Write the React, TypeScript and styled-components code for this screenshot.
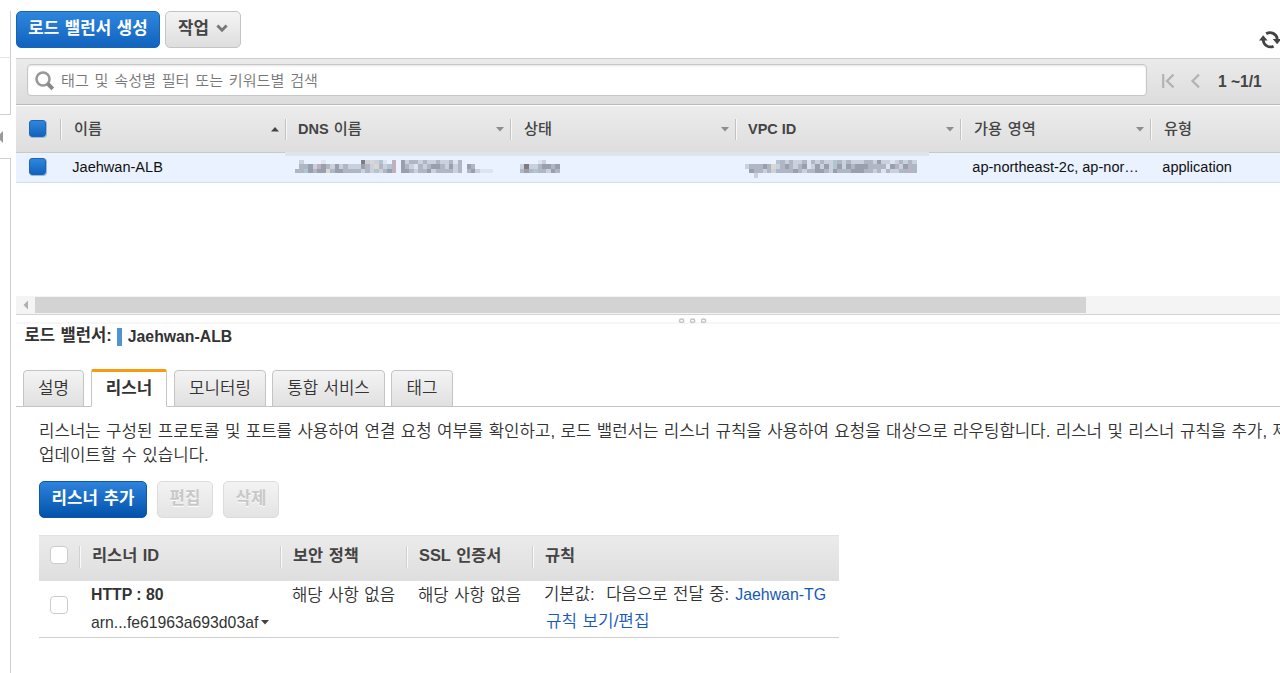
import React from 'react';
import styled, { createGlobalStyle } from 'styled-components';

const colors = {
  text: '#333',
  heading: '#444',
  link: '#1659b8',
  border: '#c4c4c4',
  selected: '#e9f2fe',
};

const GlobalStyle = createGlobalStyle`
  * {
    box-sizing: border-box;
  }

  body {
    margin: 0;
    background: #fff;
    color: ${colors.text};
    font-family: 'Liberation Sans', 'Noto Sans CJK KR', sans-serif;
    overflow: hidden;
  }
`;

const Page = styled.div`
  display: flex;
  width: 1280px;
  height: 673px;
  overflow: hidden;
`;

const Rail = styled.aside`
  display: flex;
  flex-direction: column;
  flex: 0 0 11px;
  margin-right: 5px;
  padding-top: 11px;
`;

const RailSection = styled.div<{ $height?: number; $top?: boolean; $bottom?: string }>`
  flex: ${(props) => (props.$height ? `0 0 ${props.$height}px` : 1)};
  border-right: 1px solid #cfcfcf;
  border-top: ${(props) => (props.$top ? '1px solid #cfcfcf' : 'none')};
  border-bottom: ${(props) => (props.$bottom ? `1px solid ${props.$bottom}` : 'none')};
`;

const RailToggle = styled.div`
  display: flex;
  align-items: center;
  flex: 0 0 43px;
`;

const Main = styled.main`
  display: flex;
  flex-direction: column;
  flex: 1;
  min-width: 0;
`;

const Toolbar = styled.div`
  display: flex;
  align-items: flex-start;
  gap: 5px;
  flex: 0 0 58px;
  padding-top: 11px;
`;

type ButtonKind = 'primary' | 'strong' | 'normal' | 'disabled';

const buttonStyles: Record<ButtonKind, string> = {
  primary: 'color: #fff; background: linear-gradient(#2f86dd, #1163bd); border-color: #1a63b4;',
  strong: 'color: #fff; background: linear-gradient(#2e83dc, #0252ab); border-color: #0f57a8;',
  normal: 'color: #444; background: linear-gradient(#f4f4f4, #dedede); border-color: #c4c4c4;',
  disabled:
    'color: #c8c8c8; background: linear-gradient(#f3f3f3, #e4e4e4); border-color: #dcdcdc; text-shadow: 0 1px 0 #fff;',
};

const Button = styled.button<{ $kind: ButtonKind; $width: number }>`
  display: flex;
  align-items: center;
  justify-content: center;
  width: ${(props) => props.$width}px;
  height: 37px;
  padding: 0 0 2px;
  border: 1px solid;
  border-radius: 5px;
  font: bold 16.8px 'Liberation Sans', 'Noto Sans CJK KR', sans-serif;
  line-height: 20px;
  white-space: nowrap;
  word-spacing: 1px;
  ${(props) => buttonStyles[props.$kind]}
`;

const ButtonIcon = styled.svg`
  margin-left: 7px;
`;

const RefreshIcon = styled.svg`
  flex: none;
  margin: 19px -1px 0 auto;
`;

const FilterBar = styled.div`
  display: flex;
  align-items: center;
  flex: 0 0 47px;
  padding: 0 0 3px 11px;
  border-top: 1px solid #ccc;
  border-bottom: 1px solid #b9b9b9;
  background: linear-gradient(#ebebeb, #dcdcdc);
`;

const SearchBox = styled.div`
  display: flex;
  align-items: center;
  width: 1120px;
  height: 32px;
  padding: 1px 0 0 7px;
  border: 1px solid #c6c6c6;
  border-radius: 4px;
  background: #fff;
  box-shadow: inset 0 1px 2px #e4e4e4;
`;

const Placeholder = styled.span`
  margin-left: 6px;
  padding-top: 1px;
  color: #777;
  font-size: 15.1px;
  font-weight: 350;
  line-height: 20px;
  word-spacing: 1.6px;
`;

const Pager = styled.div`
  display: flex;
  align-items: center;
  margin-left: 14px;
  padding-top: 2px;
`;

const PagerText = styled.span`
  margin-left: 17px;
  padding-top: 2px;
  color: ${colors.heading};
  font-size: 15.6px;
  font-weight: bold;
  white-space: nowrap;
`;

const gridColumns = '44px 225px 225px 225px 225px 190px 130px';

const HeaderRow = styled.div`
  display: grid;
  grid-template-columns: ${gridColumns};
  align-items: center;
  flex: 0 0 48px;
  border-top: 1px solid #fff;
  border-bottom: 1px solid #c9c9c9;
  background: linear-gradient(#ececec, #dedede);
`;

const HeaderCell = styled.div`
  display: flex;
  align-items: center;
  justify-content: space-between;
  height: 21px;
  padding: 0 6px 0 12px;
  border-left: 1px solid #c2c2c2;
  box-shadow: inset 1px 0 0 #f8f8f8;
  color: ${colors.heading};
  font-size: 14.5px;
  font-weight: bold;
  white-space: nowrap;
`;

const HeaderLabel = styled.span`
  padding-bottom: 1px;
  line-height: 20px;
`;

const HangulLabel = styled.span`
  margin-left: 1px;
  font-size: 15.2px;
  font-weight: 500;
  word-spacing: 1.5px;
`;

const SelectedRow = styled.div`
  display: grid;
  grid-template-columns: ${gridColumns};
  align-items: center;
  flex: 0 0 30px;
  border-bottom: 1px solid #d5dde8;
  background: ${colors.selected};
`;

const Cell = styled.div`
  min-width: 0;
  padding: 0 0 2px 12.3px;
  overflow: hidden;
  color: #111;
  font-size: 14.55px;
  line-height: 20px;
  white-space: nowrap;
`;

const CheckCell = styled.div`
  display: flex;
  padding: 0 0 1px 13px;
`;

const Checkbox = styled.span<{ $checked?: boolean }>`
  display: flex;
  align-items: flex-end;
  justify-content: flex-end;
  width: 18px;
  height: 18px;
  border: 1px solid #ccc;
  border-right-color: ${(props) => (props.$checked ? '#9db8d6' : '#ccc')};
  border-bottom-color: ${(props) => (props.$checked ? '#9db8d6' : '#ccc')};
  border-radius: 4px;
  background: ${(props) => (props.$checked ? '#f2f2f2' : '#fff')};

  &::after {
    content: '';
    display: ${(props) => (props.$checked ? 'block' : 'none')};
    flex: none;
    width: 15px;
    height: 15px;
    border: 1px solid #1a66ba;
    border-radius: 3px;
    background: linear-gradient(#3086dc, #1263bd);
  }
`;

const ScrollBar = styled.div`
  display: flex;
  align-items: center;
  flex: 0 0 18px;
  margin-top: 113px;
  background: #f4f4f4;
`;

const ScrollArrow = styled.svg`
  flex: 0 0 19px;
`;

const ScrollThumb = styled.div`
  width: 1051px;
  height: 16px;
  background: #d3d3d3;
`;

const Splitter = styled.div`
  display: flex;
  justify-content: center;
  flex: 0 0 10px;
  min-height: 0;
  height: 10px;
  padding: 3px 0 0 90px;
  border-top: 1px solid #d2d2d2;
  border-bottom: 2px solid #f6f6f6;
`;

const Title = styled.h2`
  display: flex;
  align-items: center;
  flex: 0 0 46px;
  margin: 0;
  padding: 0 0 22px 8.5px;
  font-size: 15.8px;
  line-height: 22px;
`;

const TitleLabel = styled.span`
  font-size: 16.6px;
  word-spacing: 0.8px;
`;

const TitleMarker = styled.span`
  width: 5px;
  height: 18px;
  margin: 2px 6px 0 5px;
  background: #4f93d2;
`;

const TitleName = styled.span`
  padding-top: 1px;
`;

const TabList = styled.div`
  display: flex;
  align-items: flex-end;
  flex: 0 0 37px;
  height: 37px;
  min-height: 0;
  padding-left: 7px;
  box-shadow: inset 0 -1px 0 ${colors.border};
`;

const Tab = styled.div<{ $width: number; $gap?: number; $active?: boolean }>`
  display: flex;
  align-items: center;
  justify-content: center;
  width: ${(props) => props.$width}px;
  height: ${(props) => (props.$active ? 38 : 37)}px;
  margin-right: ${(props) => props.$gap ?? 6}px;
  border: 1px solid ${colors.border};
  border-top: ${(props) => (props.$active ? '3px solid #fa9a0e' : `1px solid ${colors.border}`)};
  border-bottom-color: ${(props) => (props.$active ? '#fff' : colors.border)};
  border-radius: ${(props) => (props.$active ? '2px 2px 0 0' : '4px 4px 0 0')};
  background: ${(props) => (props.$active ? '#fff' : 'linear-gradient(#f4f4f4, #e0e0e0)')};
  font-size: 16.8px;
  font-weight: ${(props) => (props.$active ? 'bold' : 350)};
  line-height: 24px;
  white-space: nowrap;
  word-spacing: 0.7px;
`;

const Panel = styled.section`
  padding: 13px 0 0 23px;
`;

const Description = styled.p`
  margin: 0;
  font-size: 16.8px;
  font-weight: 350;
  line-height: 24px;
  white-space: nowrap;
  word-spacing: 0.7px;
`;

const Actions = styled.div`
  display: flex;
  gap: 10px;
  margin-top: 13px;
`;

const ListenerTable = styled.div`
  width: 800px;
  margin-top: 17px;
  border-bottom: 1px solid #cfcfcf;
`;

const listenerColumns = '41px 201px 126px 126px 306px';

const ListenerHeader = styled.div`
  display: grid;
  grid-template-columns: ${listenerColumns};
  height: 46px;
  padding-top: 10px;
  border-top: 1px solid #e2e2e2;
  background: linear-gradient(#ebebeb, #dedede);
`;

const ListenerHeading = styled.div`
  height: 22px;
  padding-left: 12px;
  margin-left: -1px;
  border-left: 1px solid #d0d0d0;
  box-shadow: inset 1px 0 0 #fafafa;
  color: ${colors.heading};
  font-size: 16.4px;
  font-weight: bold;
  line-height: 18px;
  white-space: nowrap;
  word-spacing: 1px;
`;

const ListenerRow = styled.div`
  display: grid;
  grid-template-columns: ${listenerColumns};
  height: 56px;
`;

const ListenerCheck = styled.div<{ $top?: number }>`
  padding: ${(props) => props.$top ?? -0}px 0 0 11px;
`;

const ListenerCell = styled.div<{ $light?: boolean; $top?: number }>`
  padding: ${(props) => props.$top ?? 0}px 0 0 11px;
  font-size: 16.7px;
  font-weight: ${(props) => (props.$light ? 350 : 400)};
  line-height: 27px;
  white-space: nowrap;
  word-spacing: 0.8px;
`;

const Protocol = styled.strong`
  display: block;
  font-size: 15.8px;
  line-height: 28px;
  word-spacing: 0;
`;

const Arn = styled.span`
  display: flex;
  align-items: center;
  gap: 3px;
  font-size: 15.75px;
`;

const RuleTarget = styled.div`
  display: flex;
`;

const Forward = styled.span`
  margin: 0 6px 0 11.5px;
`;

const Link = styled.a`
  color: ${colors.link};
  font-size: 15.9px;
`;

const RulesLink = styled(Link)`
  padding-left: 2px;
  font-size: 16.9px;
`;

// Tones of the redacted cells, one letter per mosaic block.
const tones: Record<string, string> = {
  a: '#dde4f0',
  b: '#c9d0de',
  c: '#b0b6c4',
  d: '#999fac',
  e: '#807b7c',
  f: '#bfb0bd',
  g: '#ddd6cd',
  h: '#b0c4d1',
};

interface RedactedProps {
  rows: string[];
}

function Redacted({ rows }: RedactedProps) {
  const size = 4.4;
  return (
    <svg width={rows[0].length * size} height={18} shapeRendering="crispEdges">
      {rows.map((row, y) =>
        [...row].map((tone, x) =>
          tone === '.' ? null : (
            <rect key={`${x}-${y}`} x={x * size} y={y * size} width={size} height={size} fill={tones[tone]} />
          ),
        ),
      )}
    </svg>
  );
}

const RedactedCell = styled.div<{ $band?: number }>`
  display: flex;
  align-items: flex-start;
  align-self: stretch;
  margin-top: -1px;
  padding: 8px 0 0 10px;
  background: linear-gradient(#dfe4ec, #dfe4ec) 0 0 / ${(props) => props.$band ?? 225}px 4px no-repeat;
`;

const dnsRows = [
  '.b....a........ebgbha.f.dbccbcbbcbbcac.......',
  '.ccdbfdcbdbcbbbdcbgcbhf.dcbacbcddcbdbc.dc....',
  'cchdcddgcddccccbcbhbcdf.ddcbccdbccccbc.cdbaaa',
];

const stateRows = ['....ab...', 'bebbcddcd', 'cdchccbdc'];

const vpcRows = [
  '.......hcbcbbcacbcbbhcbcbbbccbdbbabcbcb',
  'bcccdcgbcdcbcdabdbdbhdbdcdddccccadcbdcc',
  '.dccbcbccccdcbccddcbdcccdddccbcacbbccfc',
  '..b....................................',
];

function CaretDown({ fill = '#8d8d8d' }: { fill?: string }) {
  return (
    <svg width="8" height="5" viewBox="0 0 8 5">
      <path d="M0 0h8L4 4.5z" fill={fill} />
    </svg>
  );
}

function CaretUp() {
  return (
    <svg width="8" height="5" viewBox="0 0 8 5">
      <path d="M0 4.5h8L4 0z" fill="#444" />
    </svg>
  );
}

function Handle() {
  return (
    <svg width="30" height="5" viewBox="0 0 30 5" fill="none" stroke="#c4c4c4" strokeWidth="1.4">
      <path d="M1.6 4.6V2.5Q1.6 1 3.6 1T5.6 2.5V4.6M12.6 4.6V2.5Q12.6 1 14.6 1T16.6 2.5V4.6M23.6 4.6V2.5Q23.6 1 25.6 1T27.6 2.5V4.6" />
      <path d="M2 4.3h3M13 4.3h3M24 4.3h3" />
    </svg>
  );
}

function LoadBalancerGrid() {
  return (
    <>
      <HeaderRow>
        <CheckCell>
          <Checkbox $checked />
        </CheckCell>
        <HeaderCell>
          <HeaderLabel>
            <HangulLabel>이름</HangulLabel>
          </HeaderLabel>
          <CaretUp />
        </HeaderCell>
        <HeaderCell>
          <HeaderLabel>
            DNS <HangulLabel>이름</HangulLabel>
          </HeaderLabel>
          <CaretDown />
        </HeaderCell>
        <HeaderCell>
          <HeaderLabel>
            <HangulLabel>상태</HangulLabel>
          </HeaderLabel>
          <CaretDown />
        </HeaderCell>
        <HeaderCell>
          <HeaderLabel>VPC ID</HeaderLabel>
          <CaretDown />
        </HeaderCell>
        <HeaderCell>
          <HeaderLabel>
            <HangulLabel>가용 영역</HangulLabel>
          </HeaderLabel>
          <CaretDown />
        </HeaderCell>
        <HeaderCell>
          <HeaderLabel>
            <HangulLabel>유형</HangulLabel>
          </HeaderLabel>
        </HeaderCell>
      </HeaderRow>
      <SelectedRow>
        <CheckCell>
          <Checkbox $checked />
        </CheckCell>
        <Cell>Jaehwan-ALB</Cell>
        <RedactedCell>
          <Redacted rows={dnsRows} />
        </RedactedCell>
        <RedactedCell>
          <Redacted rows={stateRows} />
        </RedactedCell>
        <RedactedCell $band={194}>
          <Redacted rows={vpcRows} />
        </RedactedCell>
        <Cell>ap-northeast-2c, ap-nor…</Cell>
        <Cell>application</Cell>
      </SelectedRow>
    </>
  );
}

function Listeners() {
  return (
    <ListenerTable>
      <ListenerHeader>
        <ListenerCheck>
          <Checkbox />
        </ListenerCheck>
        <ListenerHeading>리스너 ID</ListenerHeading>
        <ListenerHeading>보안 정책</ListenerHeading>
        <ListenerHeading>SSL 인증서</ListenerHeading>
        <ListenerHeading>규칙</ListenerHeading>
      </ListenerHeader>
      <ListenerRow>
        <ListenerCheck $top={15}>
          <Checkbox />
        </ListenerCheck>
        <ListenerCell>
          <Protocol>HTTP : 80</Protocol>
          <Arn>
            arn...fe61963a693d03af
            <CaretDown fill="#444" />
          </Arn>
        </ListenerCell>
        <ListenerCell $light $top={1}>
          해당 사항 없음
        </ListenerCell>
        <ListenerCell $light $top={1}>
          해당 사항 없음
        </ListenerCell>
        <ListenerCell $light>
          <RuleTarget>
            기본값:<Forward>다음으로 전달 중:</Forward>
            <Link>Jaehwan-TG</Link>
          </RuleTarget>
          <RulesLink>규칙 보기/편집</RulesLink>
        </ListenerCell>
      </ListenerRow>
    </ListenerTable>
  );
}

export default function App() {
  return (
    <Page>
      <GlobalStyle />
      <Rail>
        <RailSection $height={47} $bottom="#e4e4e4" />
        <RailSection $height={57} $bottom="#cfcfcf" />
        <RailToggle>
          <svg width="4" height="14" viewBox="0 0 4 14">
            <path d="M3 1v12L-3 7z" fill="#999" />
          </svg>
        </RailToggle>
        <RailSection $top />
      </Rail>
      <Main>
        <Toolbar>
          <Button $kind="primary" $width={144}>
            로드 밸런서 생성
          </Button>
          <Button $kind="normal" $width={76}>
            작업
            <ButtonIcon width="12" height="9" viewBox="0 0 12 9">
              <path d="M1.4 1.6l4.6 4.6 4.6-4.6" fill="none" stroke="#777" strokeWidth="2.8" />
            </ButtonIcon>
          </Button>
          <RefreshIcon width="22" height="20" viewBox="0 0 22 20">
            <path d="M7.2 3.8A7.3 7.3 0 0 1 18.3 9" fill="none" stroke="#444" strokeWidth="2.8" />
            <path d="M14.6 16.2A7.3 7.3 0 0 1 4.2 10" fill="none" stroke="#444" strokeWidth="2.8" />
            <path d="M0 10.4L4.2 5.2l4.4 5.2zM13.8 9h8.6l-4.3 5.2z" fill="#444" />
          </RefreshIcon>
        </Toolbar>
        <FilterBar>
          <SearchBox>
            <svg width="20" height="20" viewBox="0 0 20 20">
              <circle cx="8" cy="8" r="6.5" fill="none" stroke="#999" strokeWidth="2.6" />
              <path d="M12.6 12.6l5.2 5.2" stroke="#888" strokeWidth="4" />
            </svg>
            <Placeholder>태그 및 속성별 필터 또는 키워드별 검색</Placeholder>
          </SearchBox>
          <Pager>
            <svg width="40" height="16" viewBox="0 0 40 16" fill="none" stroke="#b3b3b3" strokeWidth="2.2">
              <path d="M2.2 1v14M12.5 1.6L6 8l6.5 6.4M38 1.6L31.5 8l6.5 6.4" />
            </svg>
            <PagerText>1 ~1/1</PagerText>
          </Pager>
        </FilterBar>
        <LoadBalancerGrid />
        <ScrollBar>
          <ScrollArrow width="19" height="18" viewBox="0 0 19 18">
            <path d="M12 4.5v9L7.5 9z" fill="#b0b0b0" />
          </ScrollArrow>
          <ScrollThumb />
        </ScrollBar>
        <Splitter>
          <Handle />
        </Splitter>
        <Title>
          <TitleLabel>로드 밸런서:</TitleLabel>
          <TitleMarker />
          <TitleName>Jaehwan-ALB</TitleName>
        </Title>
        <TabList>
          <Tab $width={61} $gap={7}>
            설명
          </Tab>
          <Tab $width={76} $gap={7} $active>
            리스너
          </Tab>
          <Tab $width={92}>모니터링</Tab>
          <Tab $width={113}>통합 서비스</Tab>
          <Tab $width={62}>태그</Tab>
        </TabList>
        <Panel>
          <Description>
            리스너는 구성된 프로토콜 및 포트를 사용하여 연결 요청 여부를 확인하고, 로드 밸런서는 리스너 규칙을 사용하여 요청을
            대상으로 라우팅합니다. 리스너 및 리스너 규칙을 추가, 제
            <br />
            업데이트할 수 있습니다.
          </Description>
          <Actions>
            <Button $kind="strong" $width={108}>
              리스너 추가
            </Button>
            <Button $kind="disabled" $width={56}>
              편집
            </Button>
            <Button $kind="disabled" $width={56}>
              삭제
            </Button>
          </Actions>
          <Listeners />
        </Panel>
      </Main>
    </Page>
  );
}
